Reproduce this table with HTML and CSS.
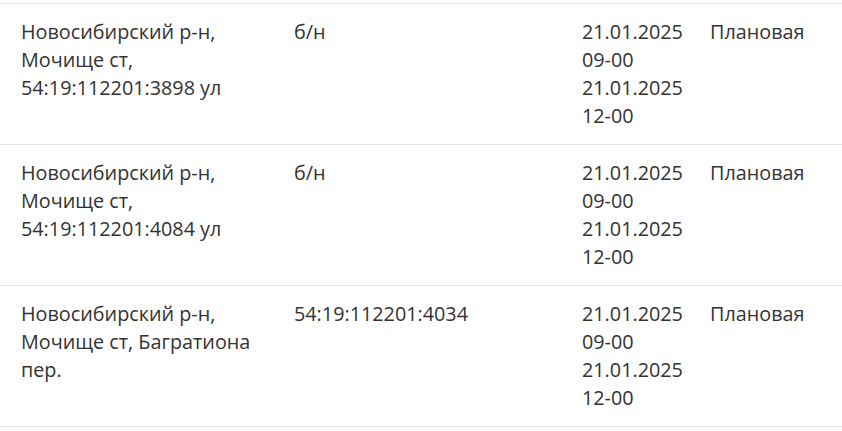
FILE: index.html
```html
<!DOCTYPE html>
<html lang="ru">
<head>
<meta charset="utf-8">
<link rel="stylesheet" href="styles.css">
</head>
<body>
<div class="table">
  <div class="row">
    <div class="cell c1">Новосибирский р-н, Мочище ст, 54:19:112201:3898 ул</div>
    <div class="cell c2">б/н</div>
    <div class="cell c3">21.01.2025<br>09-00<br>21.01.2025<br>12-00</div>
    <div class="cell c4">Плановая</div>
  </div>
  <div class="row">
    <div class="cell c1">Новосибирский р-н, Мочище ст, 54:19:112201:4084 ул</div>
    <div class="cell c2">б/н</div>
    <div class="cell c3">21.01.2025<br>09-00<br>21.01.2025<br>12-00</div>
    <div class="cell c4">Плановая</div>
  </div>
  <div class="row">
    <div class="cell c1">Новосибирский р-н, Мочище ст, Багратиона пер.</div>
    <div class="cell c2">54:19:112201:4034</div>
    <div class="cell c3">21.01.2025<br>09-00<br>21.01.2025<br>12-00</div>
    <div class="cell c4">Плановая</div>
  </div>
</div>
</body>
</html>
```
FILE: styles.css
```css
html, body {
  margin: 0;
  padding: 0;
  background: #fff;
}
body {
  font-family: "Open Sans", "Noto Sans", sans-serif;
  font-size: 19.8px;
  line-height: 28px;
  color: #333;
}
.table {
  padding-top: 3px;
}
.row {
  display: grid;
  grid-template-columns: 273px 288px 128px 1fr;
  border-top: 1px solid #e3e3e3;
}
.row:last-child {
  border-bottom: 1px solid #e3e3e3;
}
.cell {
  padding: 14px 10px 14px 21px;
  min-height: 112px;
}
```
